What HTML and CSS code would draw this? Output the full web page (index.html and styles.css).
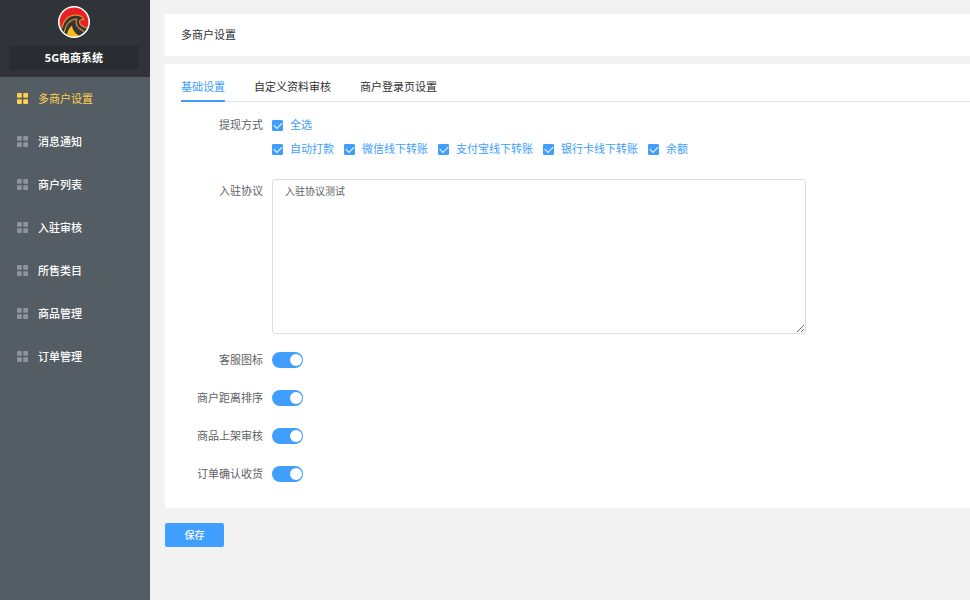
FILE: index.html
```html
<!DOCTYPE html>
<html lang="zh-CN">

<head>
    <meta charset="UTF-8">
    <meta name="viewport" content="width=device-width, initial-scale=1.0">
    <title>多商户设置</title>
    <link rel="stylesheet" href="styles.css">
</head>

<body>
    <svg class="sprite" aria-hidden="true">
        <symbol id="grid" viewBox="0 0 11 11">
            <rect x="0" y="0" width="4.8" height="4.8" rx=".8" />
            <rect x="6.2" y="0" width="4.8" height="4.8" rx=".8" />
            <rect x="0" y="6.2" width="4.8" height="4.8" rx=".8" />
            <rect x="6.2" y="6.2" width="4.8" height="4.8" rx=".8" />
        </symbol>
    </svg>

    <aside class="sidebar">
        <div class="brand">
            <svg class="logo" viewBox="0 0 32 32" aria-hidden="true">
                <circle cx="16" cy="16" r="15" fill="#ec1f27" />
                <path d="M3 24C5 15 10 9.500 17 9.200c4.500-.2 8 1.500 8.800 4.600-2.600-1-4.300.2-4.300 2 0 3 4 5.400 8.500 6.600L24 31H9z" fill="#32363b" />
                <path d="M9 29c.3-3.500 1.800-6.500 5-9.500.4 4.500 3.300 8 7.500 10.500L16 31.200z" fill="#fbbd14" />
                <path d="M3.500 22.500C6 14 10.500 9.300 17 9.200c4.500-.1 8 1.500 8.800 4.600-2.600-1-4.300.2-4.300 2 0 3 4 5.400 8.500 6.600" fill="none" stroke="#e08e22" stroke-width="1.200" />
                <path d="M6.300 26C8 18 12.500 13.200 18.600 13c-1.900 4.500.9 9.200 7.400 12.500" fill="none" stroke="#e08e22" stroke-width="1.200" />
                <circle cx="16" cy="16" r="15.200" fill="none" stroke="#fff" stroke-width="1.600" />
            </svg>
            <div class="brand-name">5G电商系统</div>
        </div>
        <nav class="menu">
            <a href="#" class="menu-item active"><svg class="menu-icon"><use href="#grid" /></svg>多商户设置</a>
            <a href="#" class="menu-item"><svg class="menu-icon"><use href="#grid" /></svg>消息通知</a>
            <a href="#" class="menu-item"><svg class="menu-icon"><use href="#grid" /></svg>商户列表</a>
            <a href="#" class="menu-item"><svg class="menu-icon"><use href="#grid" /></svg>入驻审核</a>
            <a href="#" class="menu-item"><svg class="menu-icon"><use href="#grid" /></svg>所售类目</a>
            <a href="#" class="menu-item"><svg class="menu-icon"><use href="#grid" /></svg>商品管理</a>
            <a href="#" class="menu-item"><svg class="menu-icon"><use href="#grid" /></svg>订单管理</a>
        </nav>
    </aside>

    <main class="main">
        <h1 class="page-title">多商户设置</h1>

        <form id="setting">
            <div class="card">
                <div class="tabs">
                    <a href="#" class="tab active">基础设置</a>
                    <a href="#" class="tab">自定义资料审核</a>
                    <a href="#" class="tab">商户登录页设置</a>
                </div>

                <div class="form-body">
                    <div class="form-item methods" role="group" aria-labelledby="withdraw">
                        <span class="label" id="withdraw">提现方式</span>
                        <div class="content">
                            <div class="checks">
                                <label class="check"><input type="checkbox" checked>全选</label>
                            </div>
                            <div class="checks">
                                <label class="check"><input type="checkbox" checked>自动打款</label>
                                <label class="check"><input type="checkbox" checked>微信线下转账</label>
                                <label class="check"><input type="checkbox" checked>支付宝线下转账</label>
                                <label class="check"><input type="checkbox" checked>银行卡线下转账</label>
                                <label class="check"><input type="checkbox" checked>余额</label>
                            </div>
                        </div>
                    </div>

                    <div class="form-item">
                        <label class="label" for="agreement">入驻协议</label>
                        <textarea class="textarea" id="agreement">入驻协议测试</textarea>
                    </div>

                    <div class="form-item">
                        <label class="label" for="service">客服图标</label>
                        <input type="checkbox" class="switch" id="service" checked>
                    </div>
                    <div class="form-item">
                        <label class="label" for="distance">商户距离排序</label>
                        <input type="checkbox" class="switch" id="distance" checked>
                    </div>
                    <div class="form-item">
                        <label class="label" for="goods">商品上架审核</label>
                        <input type="checkbox" class="switch" id="goods" checked>
                    </div>
                    <div class="form-item">
                        <label class="label" for="receive">订单确认收货</label>
                        <input type="checkbox" class="switch" id="receive" checked>
                    </div>
                </div>
            </div>

            <button type="submit" class="save">保存</button>
        </form>
    </main>
</body>

</html>
```
FILE: styles.css
```css
* {
    box-sizing: border-box;
}

body {
    margin: 0;
    min-height: 100vh;
    display: flex;
    background: #f2f2f2;
    color: #303133;
    font: 11px/24px "Noto Sans", "Noto Sans CJK SC", sans-serif;
}

a {
    color: inherit;
    text-decoration: none;
}

.sprite {
    display: none;
}

/* 左侧菜单 */
.sidebar {
    flex: 0 0 150px;
    background: #545c64;
    color: #fff;
}

.brand {
    height: 77px;
    padding: 6px 11px 0 9px;
    background: #303338;
    text-align: center;
}

.logo {
    display: block;
    width: 32px;
    height: 32px;
    margin: 0 auto 8px;
}

.brand-name {
    border-radius: 2px;
    background: #292c30;
    font-weight: 700;
}

.menu-item {
    height: 43px;
    padding-left: 17px;
    display: flex;
    align-items: center;
    gap: 10px;
    font-weight: 500;
}

.menu-icon {
    width: 11px;
    height: 11px;
    fill: #909399;
}

.menu-item.active {
    color: #ffd04b;
    font-weight: 400;
}

.menu-item.active .menu-icon {
    fill: #ffd04b;
}

/* 右侧内容 */
.main {
    flex: 1;
    min-width: 0;
    padding: 14px 0 15px 15px;
}

.page-title {
    margin: 0 0 8px;
    padding: 9px 16px;
    background: #fff;
    font-size: 11px;
    font-weight: 400;
}

.card {
    padding-bottom: 22px;
    background: #fff;
}

.tabs {
    display: flex;
    gap: 29px;
    margin-left: 16px;
    padding-top: 9px;
    border-bottom: 1px solid #dfe2e8;
}

.tab {
    margin-bottom: -1px;
    line-height: 27px;
    border-bottom: 2px solid transparent;
}

.tab.active {
    color: #409eff;
    border-color: #409eff;
}

.form-body {
    padding: 11px 16px 0 0;
    display: flex;
    flex-direction: column;
    gap: 14px;
}

.form-item {
    display: flex;
}

.methods {
    margin-bottom: 4px;
}

.label {
    flex: 0 0 107px;
    padding-right: 9px;
    color: #606266;
    text-align: right;
}

.checks {
    display: flex;
    flex-wrap: wrap;
    gap: 0 10px;
}

.check {
    display: flex;
    align-items: center;
    gap: 7px;
    color: #409eff;
}

.check input {
    appearance: none;
    display: flex;
    justify-content: center;
    width: 11px;
    height: 11px;
    margin: 0;
    border: 1px solid #dcdfe6;
    border-radius: 1px;
    background: #fff;
}

.check input:checked {
    border-color: #409eff;
    background: #409eff;
}

/* 勾选标记 */
.check input:checked::after {
    content: "";
    width: 7px;
    height: 4px;
    margin-top: 1px;
    border: solid #fff;
    border-width: 0 0 1px 1px;
    transform: rotate(-45deg);
}

.textarea {
    flex: 0 1 534px;
    min-width: 0;
    height: 155px;
    padding: 3px 12px;
    border: 1px solid #dcdfe6;
    border-radius: 3px;
    color: #606266;
    font: 10px/16px "Noto Sans", "Noto Sans CJK SC", sans-serif;
    resize: vertical;
}

/* 开关 */
.switch {
    appearance: none;
    width: 31px;
    height: 16px;
    margin: 4px 0;
    padding: 2px 1px;
    border-radius: 8px;
    background: #dcdfe6;
}

.switch::after {
    content: "";
    display: block;
    width: 12px;
    height: 12px;
    border-radius: 50%;
    background: #fff;
}

.switch:checked {
    background: #409eff;
}

.switch:checked::after {
    margin-left: auto;
}

.save {
    display: block;
    width: 59px;
    height: 24px;
    margin-top: 15px;
    padding: 0;
    border: 0;
    border-radius: 2px;
    background: #409eff;
    color: #fff;
    font: 500 10px/24px "Noto Sans", "Noto Sans CJK SC", sans-serif;
}
```
